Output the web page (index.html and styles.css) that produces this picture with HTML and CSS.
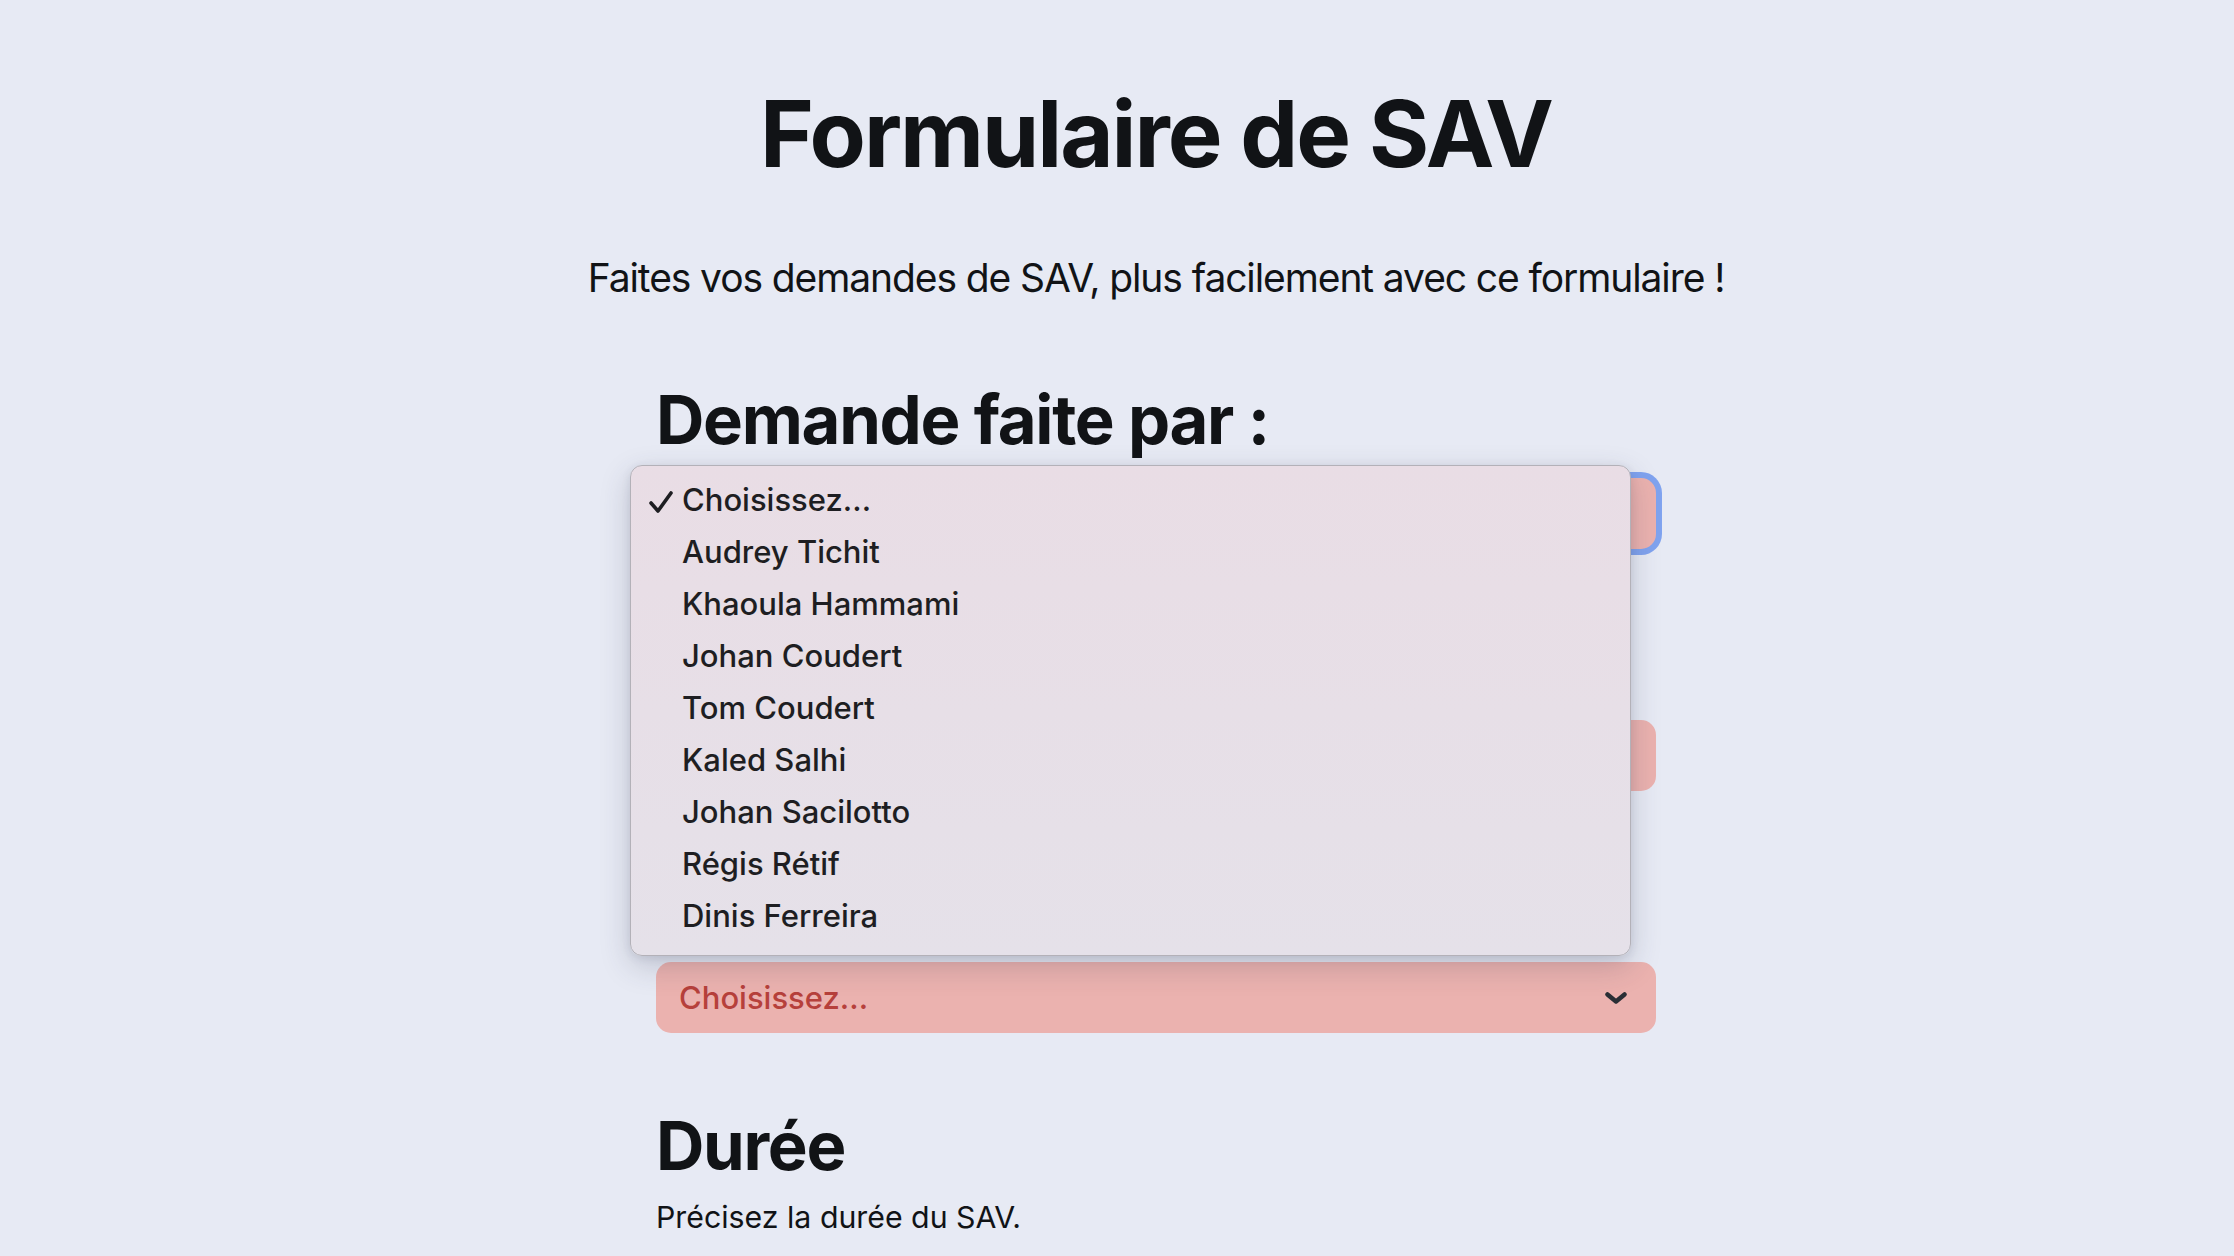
FILE: index.html
```html
<!DOCTYPE html>
<html lang="fr">
<head>
<meta charset="utf-8">
<title>Formulaire de SAV</title>
<link rel="stylesheet" href="styles.css">
</head>
<body>
<main class="page">
  <h1 class="title">Formulaire de SAV</h1>
  <p class="lead">Faites vos demandes de SAV, plus facilement avec ce formulaire !</p>
  <form class="form">
    <section class="field">
      <h2 class="field-title">Demande faite par :</h2>
      <div class="select is-focused">
        <span class="select-value is-covered">Choisissez...</span>
        <svg class="chevron" viewBox="0 0 22 12" aria-hidden="true"><polyline points="2.5,2.5 11,9.5 19.5,2.5"/></svg>
      </div>
      <ul class="popup">
        <li class="option is-checked">
          <svg class="check" viewBox="0 0 24 22" aria-hidden="true"><polyline points="2,12 9,20 22,2"/></svg>
          Choisissez...
        </li>
        <li class="option">Audrey Tichit</li>
        <li class="option">Khaoula Hammami</li>
        <li class="option">Johan Coudert</li>
        <li class="option">Tom Coudert</li>
        <li class="option">Kaled Salhi</li>
        <li class="option">Johan Sacilotto</li>
        <li class="option">Régis Rétif</li>
        <li class="option">Dinis Ferreira</li>
      </ul>
    </section>
    <section class="field">
      <div class="field-title-space"></div>
      <div class="select">
        <span class="select-value is-covered">Choisissez...</span>
        <svg class="chevron" viewBox="0 0 22 12" aria-hidden="true"><polyline points="2.5,2.5 11,9.5 19.5,2.5"/></svg>
      </div>
    </section>
    <section class="field">
      <div class="field-title-space"></div>
      <div class="select">
        <span class="select-value">Choisissez...</span>
        <svg class="chevron" viewBox="0 0 22 12" aria-hidden="true"><polyline points="2.5,2.5 11,9.5 19.5,2.5"/></svg>
      </div>
    </section>
    <section class="field">
      <h2 class="field-title field-title-tight">Durée</h2>
      <p class="help">Précisez la durée du SAV.</p>
    </section>
  </form>
</main>
</body>
</html>
```
FILE: styles.css
```css
* { box-sizing: border-box; }

html, body {
  margin: 0;
  padding: 0;
  background: #e7eaf4;
  overflow: hidden;
}

body {
  font-family: Inter, "Noto Sans", "Liberation Sans", sans-serif;
  color: #111316;
}

.page {
  padding: 76px 0 0 78px;
  display: flex;
  flex-direction: column;
  align-items: center;
}

.title {
  margin: 0;
  font-size: 92px;
  line-height: 116px;
  font-weight: 700;
  letter-spacing: -2px;
  text-align: center;
}

.lead {
  margin: 56px 0 0;
  font-size: 39px;
  line-height: 60px;
  font-weight: 400;
  letter-spacing: -1.1px;
  text-align: center;
}

.form {
  width: 1000px;
  display: flex;
  flex-direction: column;
  gap: 73px;
  margin-top: 72px;
}

.field {
  position: relative;
  display: flex;
  flex-direction: column;
}

.field-title {
  margin: 0 0 18px;
  font-size: 67px;
  line-height: 80px;
  font-weight: 700;
  letter-spacing: -1.3px;
}

.field-title-space {
  height: 80px;
  margin-bottom: 18px;
}

.field-title-tight {
  margin-bottom: 9px;
}

.select {
  height: 71px;
  border-radius: 15px;
  background: #ebb2af;
  display: flex;
  align-items: center;
  justify-content: space-between;
  padding: 0 29px 0 23px;
}

.select.is-focused {
  box-shadow: 0 0 0 6px #80a3ef;
}

.select-value {
  font-size: 31px;
  font-weight: 500;
  color: #b6403b;
}

.select-value.is-covered {
  visibility: hidden;
}

.chevron {
  width: 22px;
  height: 12px;
  fill: none;
  stroke: #2a2e35;
  stroke-width: 4.5;
  stroke-linecap: round;
  stroke-linejoin: round;
}

.help {
  margin: 0;
  font-size: 30.3px;
  line-height: 45px;
}

.popup {
  position: absolute;
  left: -26px;
  top: 85px;
  width: 1001px;
  height: 491px;
  margin: 0;
  padding: 8px 0 9px;
  list-style: none;
  border: 1px solid #b3b1b8;
  border-radius: 12px;
  background: linear-gradient(180deg, #e9dde5 0%, #e7dfe7 50%, #e5e1e9 100%);
  box-shadow: 0 10px 30px rgba(50, 55, 80, 0.22), 0 2px 8px rgba(50, 55, 80, 0.10);
  z-index: 10;
}

.option {
  position: relative;
  height: 52px;
  line-height: 52px;
  padding-left: 51px;
  font-size: 31px;
  font-weight: 500;
  color: #1e1e22;
}

.check {
  position: absolute;
  left: 18px;
  top: 17px;
  width: 24px;
  height: 22px;
  fill: none;
  stroke: #1e1e22;
  stroke-width: 3.6;
  stroke-linecap: round;
  stroke-linejoin: round;
}
```
